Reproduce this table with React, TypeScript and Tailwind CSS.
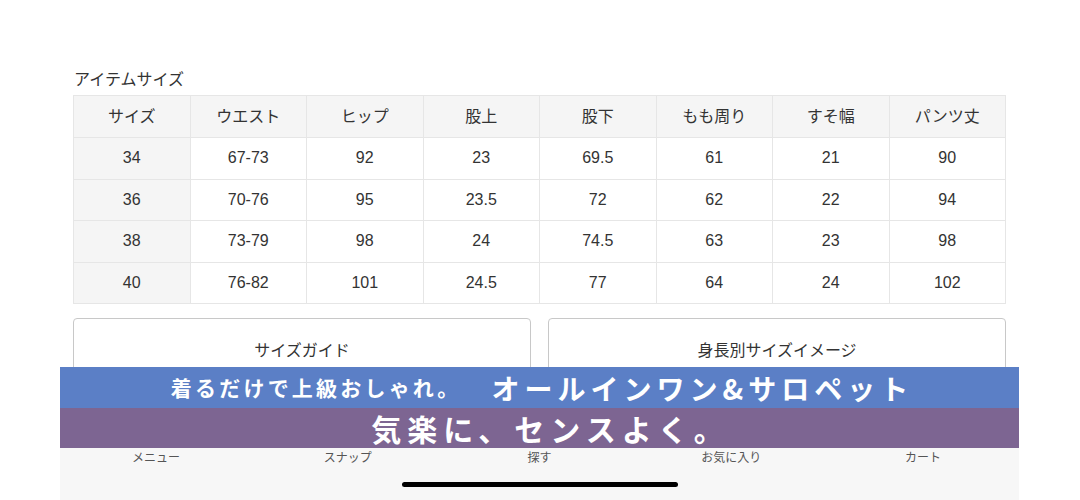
import React from "react";

const headers = ["サイズ", "ウエスト", "ヒップ", "股上", "股下", "もも周り", "すそ幅", "パンツ丈"];
const rows = [
  ["34", "67-73", "92", "23", "69.5", "61", "21", "90"],
  ["36", "70-76", "95", "23.5", "72", "62", "22", "94"],
  ["38", "73-79", "98", "24", "74.5", "63", "23", "98"],
  ["40", "76-82", "101", "24.5", "77", "64", "24", "102"],
];
const nav = ["メニュー", "スナップ", "探す", "お気に入り", "カート"];

export default function App() {
  return (
    <div
      className="relative w-[1080px] h-[500px] overflow-hidden bg-white text-[#333]"
      style={{ fontFamily: '"Liberation Sans", "Noto Sans CJK JP", sans-serif' }}
    >
      <div className="pl-[73px] pr-[74px] pt-[70px]">
        <div className="text-[16px] leading-[20px] pl-[1px] mb-[5px]">アイテムサイズ</div>
        <table className="w-[933px] border-collapse table-fixed text-[16px]">
          <thead>
            <tr className="h-[42px] bg-[#f5f5f5]">
              {headers.map((h) => (
                <th key={h} className="border border-[#e6e6e6] font-normal text-center">
                  {h}
                </th>
              ))}
            </tr>
          </thead>
          <tbody>
            {rows.map((r) => (
              <tr key={r[0]} className="h-[41.5px]">
                {r.map((c, i) => (
                  <td
                    key={i}
                    className={`border border-[#e6e6e6] text-center ${i === 0 ? "bg-[#f5f5f5]" : "bg-white"}`}
                  >
                    {c}
                  </td>
                ))}
              </tr>
            ))}
          </tbody>
        </table>
        <div className="mt-[14px] flex gap-[17px]">
          <div className="flex-1 h-[64px] border border-[#c8c8c8] rounded-[4px] flex justify-center pt-[20px] text-[16px]">
            サイズガイド
          </div>
          <div className="flex-1 h-[64px] border border-[#c8c8c8] rounded-[4px] flex justify-center pt-[20px] text-[16px]">
            身長別サイズイメージ
          </div>
        </div>
      </div>

      <div className="absolute left-[60px] top-[367px] w-[959px]">
        <div
          className="h-[41px] bg-[#5b7fc6] text-white font-bold flex items-center justify-center pl-[5px]"
          style={{ fontFamily: '"Noto Sans CJK JP", sans-serif' }}
        >
          <span className="text-[21px] tracking-[3.2px]">着るだけで上級おしゃれ。</span>
          <span className="ml-[30px] text-[28px] tracking-[5px]">オールインワン&amp;サロペット</span>
        </div>
        <div
          className="h-[40px] bg-[#7d6592] text-white font-bold flex items-center justify-center text-[30px] tracking-[6px] pl-[22px]"
          style={{ fontFamily: '"Noto Sans CJK JP", sans-serif' }}
        >
          気楽に、センスよく。
        </div>
        <div className="h-[52px] bg-[#f7f7f7] relative">
          <div className="grid grid-cols-5 text-[12px] text-[#555] leading-[16px] pt-[2px]">
            {nav.map((n) => (
              <div key={n} className="text-center">
                {n}
              </div>
            ))}
          </div>
          <div className="absolute left-[342px] top-[34px] w-[276px] h-[5px] rounded-full bg-black" />
        </div>
      </div>
    </div>
  );
}
